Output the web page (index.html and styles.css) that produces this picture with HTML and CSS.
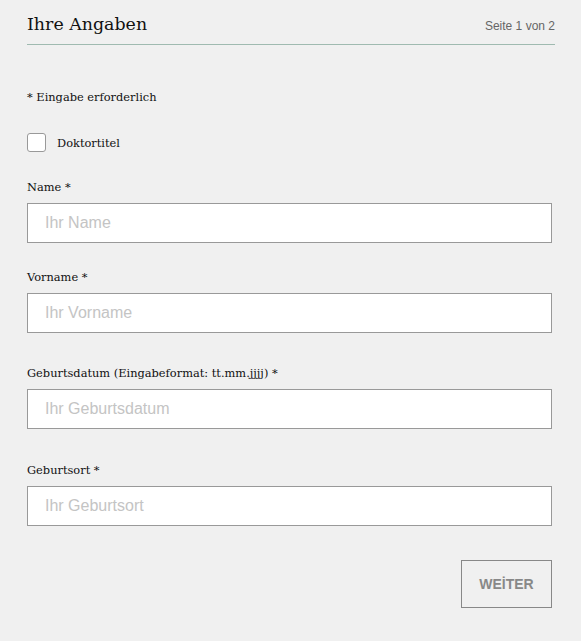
FILE: index.html
```html
<!DOCTYPE html>
<html lang="de">
<head>
<meta charset="utf-8">
<link rel="stylesheet" href="styles.css">
</head>
<body>
<div class="page">
  <header class="head">
    <h1 class="title">Ihre Angaben</h1>
    <span class="step">Seite 1 von 2</span>
  </header>
  <p class="note">* Eingabe erforderlich</p>
  <label class="check">
    <span class="box"></span>
    <span class="check-label">Doktortitel</span>
  </label>
  <div class="field f-name">
    <label class="label">Name *</label>
    <input class="input" type="text" placeholder="Ihr Name">
  </div>
  <div class="field f-vorname">
    <label class="label">Vorname *</label>
    <input class="input" type="text" placeholder="Ihr Vorname">
  </div>
  <div class="field f-datum">
    <label class="label">Geburtsdatum (Eingabeformat: tt.mm.jjjj) *</label>
    <input class="input" type="text" placeholder="Ihr Geburtsdatum">
  </div>
  <div class="field f-ort">
    <label class="label">Geburtsort *</label>
    <input class="input" type="text" placeholder="Ihr Geburtsort">
  </div>
  <div class="actions">
    <button class="btn" type="button">WEİTER</button>
  </div>
</div>
</body>
</html>
```
FILE: styles.css
```css
html, body {
  margin: 0;
  padding: 0;
  background: #f0f0f0;
}
.page {
  padding: 12px 26px 0 27px;
  font-family: "DejaVu Serif", Georgia, serif;
  color: #111;
}
.head {
  display: flex;
  justify-content: space-between;
  align-items: flex-end;
  border-bottom: 1px solid #9fbab0;
  padding-bottom: 8px;
}
.title {
  margin: 0;
  font-weight: normal;
  font-size: 17.4px;
  line-height: 24px;
}
.step {
  font-family: "Liberation Sans", Arial, sans-serif;
  font-size: 12px;
  color: #666;
  line-height: 16px;
  padding-bottom: 2px;
}
.note {
  margin: 44px 0 0;
  font-size: 11.4px;
  line-height: 16px;
}
.check {
  display: flex;
  align-items: center;
  gap: 11px;
  margin-top: 28px;
  font-size: 11.4px;
}
.box {
  width: 17px;
  height: 17px;
  border: 1px solid #999;
  border-radius: 3px;
  background: #fff;
}
.field {
  display: flex;
  flex-direction: column;
  margin-right: 3px;
}
.f-name { margin-top: 27px; }
.f-vorname { margin-top: 26px; }
.f-datum { margin-top: 32px; }
.f-ort { margin-top: 33px; }
.label {
  font-size: 11.4px;
  line-height: 16px;
  margin-bottom: 8px;
}
.input {
  box-sizing: border-box;
  height: 40px;
  border: 1px solid #999;
  background: #fff;
  padding: 0 17px;
  font-family: "Liberation Sans", Arial, sans-serif;
  font-size: 16px;
  color: #333;
  outline: none;
}
.input::placeholder {
  color: #c4c4c4;
}
.actions {
  display: flex;
  justify-content: flex-end;
  margin-top: 34px;
  margin-right: 3px;
}
.btn {
  width: 91px;
  height: 48px;
  border: 1px solid #888;
  background: transparent;
  font-family: "Liberation Sans", Arial, sans-serif;
  font-weight: bold;
  font-size: 14px;
  color: #888;
  padding: 0;
}
```
